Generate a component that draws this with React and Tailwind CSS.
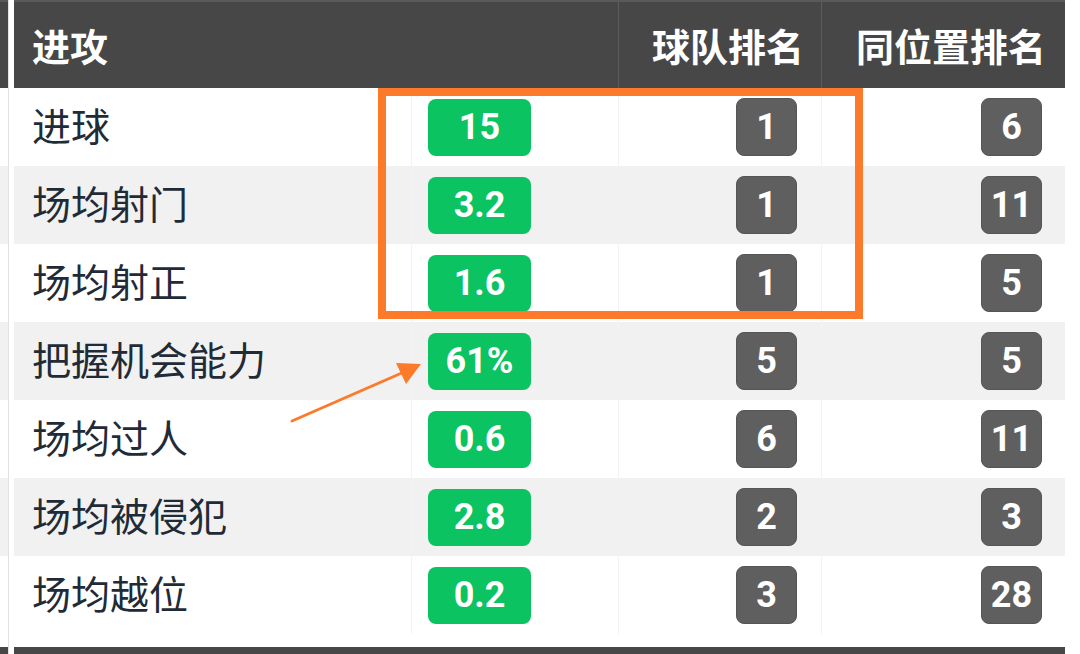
import React from 'react';

const rows = [
  { label: '进球', value: '15', team: '1', pos: '6' },
  { label: '场均射门', value: '3.2', team: '1', pos: '11' },
  { label: '场均射正', value: '1.6', team: '1', pos: '5' },
  { label: '把握机会能力', value: '61%', team: '5', pos: '5' },
  { label: '场均过人', value: '0.6', team: '6', pos: '11' },
  { label: '场均被侵犯', value: '2.8', team: '2', pos: '3' },
  { label: '场均越位', value: '0.2', team: '3', pos: '28' },
];

const cjk = { fontFamily: '"Noto Sans CJK SC", "Noto Sans", sans-serif' };
const num = { fontFamily: 'Roboto, "Noto Sans", sans-serif' };

function GrayBadge({ children }) {
  return (
    <div
      className="h-[58px] min-w-[61px] px-2 flex items-center justify-center rounded-[8px] bg-[#5f5f5f] border border-[#555] text-white text-[36px] font-bold"
      style={num}
    >
      {children}
    </div>
  );
}

export default function App() {
  return (
    <div className="relative w-[1080px] h-[654px] bg-white overflow-hidden" style={cjk}>
      <div className="flex h-full">
        {/* left strip of the neighbouring panel */}
        <div className="w-[9px] flex flex-col border-r border-[#e2e2e2]">
          <div className="h-[88px] bg-[#474747] border-t-2 border-[#5a5a5a]" />
          {rows.map((r, i) => (
            <div
              key={r.label}
              className={`${i === rows.length - 1 ? 'h-[91px]' : 'h-[78px]'} ${i % 2 ? 'bg-[#f1f1f1]' : 'bg-white'}`}
            />
          ))}
          <div className="flex-1 bg-[#474747]" />
        </div>
        <div className="w-[5px]" />

        {/* table */}
        <div className="w-[1051px] flex flex-col">
          <div className="h-[88px] flex bg-[#474747] border-t-2 border-[#5a5a5a] text-white font-bold text-[38px]">
            <div className="w-[397px] flex items-center pl-[18px] pb-[2px]">进攻</div>
            <div className="w-[207px]" />
            <div className="w-[203px] flex items-center justify-end pr-[17px] pb-[2px] border-l border-[#5c5c5c]">球队排名</div>
            <div className="flex-1 flex items-center justify-end pr-[19px] pb-[2px] border-l border-[#5c5c5c]">同位置排名</div>
          </div>
          {rows.map((r, i) => (
            <div
              key={r.label}
              className={`flex ${i === rows.length - 1 ? 'h-[91px] pb-[13px]' : 'h-[78px]'} ${i % 2 ? 'bg-[#f1f1f1]' : 'bg-white'}`}
            >
              <div className="w-[397px] flex items-center pl-[18px] pb-[6px] text-[39px] font-normal text-[#1f2b37]">{r.label}</div>
              <div className="w-[207px] flex items-center pl-[16px] border-l border-[#f3f3f3]">
                <div
                  className="w-[103px] h-[57px] flex items-center justify-center rounded-[8px] bg-[#0bc360] text-white text-[36px] font-bold"
                  style={num}
                >
                  {r.value}
                </div>
              </div>
              <div className="w-[203px] flex items-center justify-end pr-[24px] border-l border-[#f3f3f3]">
                <GrayBadge>{r.team}</GrayBadge>
              </div>
              <div className="flex-1 flex items-center justify-end pr-[23px] border-l border-[#f3f3f3]">
                <GrayBadge>{r.pos}</GrayBadge>
              </div>
            </div>
          ))}
          <div className="flex-1 bg-[#474747]" />
        </div>
      </div>

      {/* annotation box */}
      <div className="absolute left-[378px] top-[88px] w-[485px] h-[231px] border-[8px] border-[#fd7a2b]" />

      {/* annotation arrow */}
      <svg className="absolute left-0 top-0" width="1080" height="654" viewBox="0 0 1080 654">
        <line x1="292" y1="421" x2="404" y2="372" stroke="#fd7a2b" strokeWidth="3" strokeLinecap="round" />
        <polygon points="421,364 396,363 406,384" fill="#fd7a2b" />
      </svg>
    </div>
  );
}
